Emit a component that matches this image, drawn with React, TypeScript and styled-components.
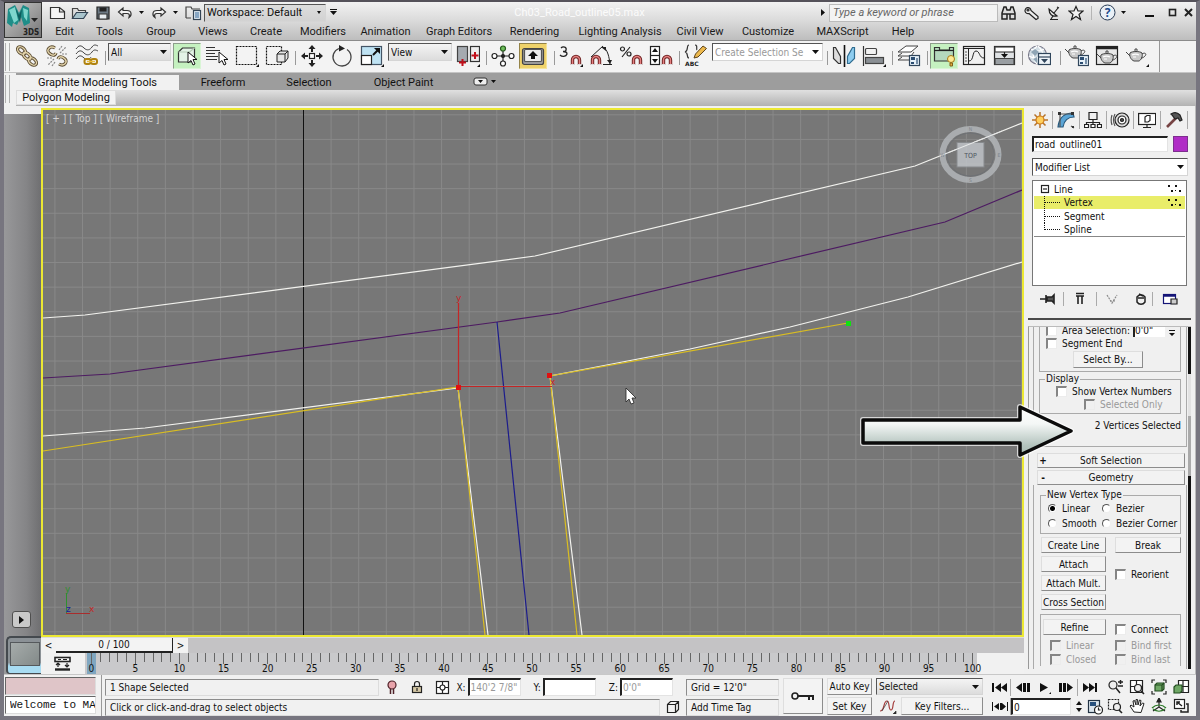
import React, { useState } from "react";
import styled, { createGlobalStyle, css } from "styled-components";

const uiFont = `Roboto, "Open Sans", sans-serif`;
const panelFont = `"DejaVu Sans Condensed", "DejaVu Sans", sans-serif`;

const GlobalStyle = createGlobalStyle`
  *, *::before, *::after { box-sizing: border-box; }
  body { margin: 0; font-family: ${panelFont}; font-size: 10px; line-height: 13px; color: #111; }
  button, input, select { font: inherit; color: inherit; margin: 0; padding: 0; border-radius: 0; }
  fieldset { margin: 0; min-width: 0; }
`;

/* ---------- frame ---------- */
const Window = styled.div`
  min-height: 100vh;
  display: flex;
  flex-direction: column;
  background: #f1f1f1;
  border: solid #77757f;
  border-width: 2px 4px 4px 4px;
  border-top-color: #55525a;
`;

const Header = styled.header`
  display: flex;
  height: 39px;
  background: linear-gradient(#f2f2f2, #dadada 50%, #bdbdbd);
  border-bottom: 1px solid #8b8b8b;
  font-family: ${uiFont};
  font-size: 11px;
`;

const AppButton = styled.button`
  width: 38px;
  height: 36px;
  border: 1px solid #333;
  background: linear-gradient(135deg, #c9c9c9, #777);
  display: block;
`;

const HeaderRows = styled.div`
  flex: 1;
  display: flex;
  flex-direction: column;
`;

const TitleRow = styled.div`
  display: flex;
  align-items: center;
  height: 22px;
  padding-left: 6px;
`;

const QuickButton = styled.button<{ $w?: number }>`
  width: ${(p) => p.$w ?? 24}px;
  height: 20px;
  border: 0;
  background: none;
  display: flex;
  align-items: center;
  justify-content: center;
`;

const FileTitle = styled.div`
  flex: 1;
  text-align: center;
  color: #fbfbfb;
`;

const SearchInput = styled.input`
  width: 169px;
  height: 18px;
  border: 1px solid #bbb;
  background: #f3f3f3;
  padding-left: 3px;
  font-style: italic;
  &::placeholder { color: #666; opacity: 1; }
`;

const TitleDivider = styled.span`
  width: 1px;
  height: 14px;
  background: #b5b5b5;
  margin: 0 4px;
`;

const MenuBar = styled.nav`
  display: flex;
  align-items: center;
  height: 17px;
  padding-left: 1px;
`;

const MenuLink = styled.a<{ $w: number }>`
  width: ${(p) => p.$w}px;
  text-align: center;
  color: #1a1a1a;
  text-decoration: none;
  white-space: nowrap;
`;

/* ---------- selects ---------- */
const SelectBox = styled.div<{ $w?: number; $h: number; $bg?: string; $color?: string }>`
  position: relative;
  width: ${(p) => (p.$w ? `${p.$w}px` : "100%")};
  height: ${(p) => p.$h}px;
  flex: none;
  border: 1px solid #d5d5d5;
  border-top-color: #555;
  border-left-color: #555;
  color: ${(p) => p.$color ?? "#111"};
  background: ${(p) => p.$bg ?? "linear-gradient(#f4f4f4, #dcdcdc)"};
  select {
    appearance: none;
    width: 100%;
    height: 100%;
    border: 0;
    background: none;
    padding: 0 14px 0 2px;
    display: block;
  }
  svg {
    position: absolute;
    right: 3px;
    top: 50%;
    margin-top: -2px;
    pointer-events: none;
  }
`;

type DropProps = { label: string; value: string; w?: number; h: number; bg?: string; color?: string; small?: boolean };
const Drop = ({ label, value, w, h, bg, color, small }: DropProps) => (
  <SelectBox $w={w} $h={h} $bg={bg} $color={color}>
    <select aria-label={label} defaultValue={value}>
      <option>{value}</option>
    </select>
    <svg width="7" height="4" viewBox="0 0 7 4">
      <path d={small ? "M2 0h4L4 3z" : "M0 0h7L3.5 4z"} fill="#111" />
    </svg>
  </SelectBox>
);

/* ---------- main toolbar ---------- */
const Toolbar = styled.div`
  display: flex;
  align-items: stretch;
  height: 32px;
  background: #f3f3f3;
  border-bottom: 1px solid #c4c4c4;
`;

const Grip = styled.span<{ $h: number }>`
  width: 5px;
  height: ${(p) => p.$h}px;
  margin: 2px 2px 0 1px;
  border: solid #b0b0b0;
  border-width: 0 1px;
`;

const ToolStrip = styled.div`
  flex: 1;
  display: flex;
  gap: 2px;
  padding: 2px 0 0 1px;
  border-right: 1px solid #999;
`;

const ToolEnd = styled.div`
  width: 36px;
`;

const ToolButton = styled.button<{ $tone?: "green" | "amber" }>`
  width: 28px;
  height: 26px;
  flex: none;
  border: 1px solid transparent;
  background: none;
  display: flex;
  align-items: center;
  justify-content: center;
  ${(p) => p.$tone === "green" && css`background: #c5f1c0; border-color: #8d9d8b #d9f5d5 #d9f5d5 #8d9d8b;`}
  ${(p) => p.$tone === "amber" && css`background: #efd26a; border-color: #948348 #f5e39b #f5e39b #948348;`}
`;

const ToolSep = styled.span<{ $wide?: boolean }>`
  width: ${(p) => (p.$wide ? 6 : 3)}px;
  height: 14px;
  margin-top: 8px;
  border-right: 1px solid #999;
  flex: none;
`;

/* ---------- ribbon ---------- */
const Ribbon = styled.div`
  display: flex;
  font-family: ${uiFont};
  font-size: 11px;
  background: #f1f1f1;
`;
const RibbonBody = styled.div`
  flex: 1;
  padding-left: 4px;
`;
const RibbonTabs = styled.div`
  display: flex;
  height: 17px;
  align-items: flex-end;
  background: #9d9d9d;
`;
const RibbonTab = styled.button<{ $w: number; $active?: boolean }>`
  width: ${(p) => p.$w}px;
  height: 15px;
  border: 0;
  white-space: nowrap;
  background: ${(p) => (p.$active ? "#f1f1f1" : "none")};
`;
const RibbonPanel = styled.div`
  height: 16px;
  background: linear-gradient(#e0e0e0, #b2b2b2);
`;
const PanelLabel = styled.button`
  width: 100px;
  height: 15px;
  border: 1px solid #ddd;
  background: #f3f3f3;
  white-space: nowrap;
`;

/* ---------- work area ---------- */
const Work = styled.main`
  position: relative;
  flex: 1;
  display: grid;
  grid-template-columns: 37px minmax(0, 1fr) 172px;
  border-bottom: 1px solid #c8c8c8;
`;

const LeftStrip = styled.div`
  display: flex;
  flex-direction: column;
  justify-content: flex-end;
  border-top: 8px solid #f0f0f0;
  background: linear-gradient(90deg, #98989a, #858587 60%, #6f6f71);
`;
const ExpandButton = styled.button`
  width: 19px;
  height: 17px;
  margin: 0 0 8px 8px;
  border: 1px solid #4f4f4f;
  border-radius: 3px;
  background: #c9c9c9;
  display: flex;
  align-items: center;
  justify-content: center;
`;
const LayoutTile = styled.button`
  height: 38px;
  margin-left: 2px;
  border: 2px solid #44494e;
  border-width: 2px 0 1px 2px;
  border-radius: 5px 0 0 4px;
  background: linear-gradient(#8b9196 70%, #a8dcf2 80%);
  padding: 4px 1px 7px 2px;
  span {
    display: block;
    height: 24px;
    border: 1px solid #55595c;
    background: linear-gradient(135deg, #a6acab, #838a89);
  }
`;

const Center = styled.div`
  display: flex;
  flex-direction: column;
  min-width: 0;
`;
const Viewport = styled.section`
  position: relative;
  flex: 1;
  min-height: 400px;
  margin-top: 2px;
  border: 2px solid #ece833;
  background: #777;
`;
const Scene = styled.svg`
  position: absolute;
  inset: 0;
  width: 100%;
  height: 100%;
  display: block;
`;
const ViewLabel = styled.div`
  position: absolute;
  left: 3px;
  top: 2px;
  color: #d4d4d4;
  white-space: pre;
`;

const TimeSlider = styled.div`
  display: flex;
  height: 16px;
  background: #c4c3c5;
  border-top: 1px solid #ddd;
`;
const TimeStep = styled.button`
  width: 15px;
  border: 0;
  background: #f2f2f2;
`;
const TimeHandle = styled.button`
  width: 117px;
  border: solid #222;
  border-width: 0 1px 2px 0;
  background: #f3f3f3;
`;

const TrackBar = styled.div`
  display: flex;
  height: 21px;
  background: #f1f1f1;
  padding-right: 47px;
`;
const TrackButton = styled.button`
  width: 44px;
  border: 0;
  background: none;
  display: flex;
  align-items: center;
  justify-content: center;
`;
const Ruler = styled.div`
  flex: 1;
  display: flex;
  padding-left: 2px;
  background: #c9c9cb;
`;
const Frame = styled.div<{ $current: boolean; $major: boolean }>`
  flex: 1 1 0;
  min-width: 0;
  display: flex;
  flex-direction: column;
  align-items: center;
  line-height: 10px;
  background: ${(p) => (p.$current ? "#7fa6c0" : "none")};
  &::before {
    content: "";
    flex: none;
    width: 1px;
    height: ${(p) => (p.$major ? 11 : 9)}px;
    background: #666;
  }
`;

/* ---------- command panel ---------- */
const Panel = styled.aside`
  display: flex;
  flex-direction: column;
  padding: 1px 4px 0 4px;
  background: #f0f0f0;
  border-right: 1px solid #bbb;
`;
const PanelTabs = styled.div`
  display: flex;
  height: 25px;
  align-items: center;
`;
const PanelTab = styled.button`
  width: 27px;
  height: 18px;
  border: 0;
  border-right: 1px solid #aaa;
  background: none;
  display: flex;
  align-items: center;
  justify-content: center;
  &:first-child { width: 25px; }
`;
const NameRow = styled.div`
  display: flex;
  align-items: center;
  gap: 5px;
  margin: 4px 3px 6px 4px;
`;
const sunken = css`
  border: solid #e3e3e3;
  border-width: 2px 1px 1px 2px;
  border-top-color: #222;
  border-left-color: #222;
`;
const TextField = styled.input<{ $w?: number; $h: number; $dim?: boolean }>`
  ${sunken}
  background: #fff;
  min-width: 0;
  height: ${(p) => p.$h}px;
  padding-left: 1px;
  color: ${(p) => (p.$dim ? "#999" : "#111")};
  ${(p) => (p.$w ? css`width: ${p.$w}px; flex: none;` : css`flex: 1;`)}
`;
const Swatch = styled.button`
  width: 15px;
  height: 16px;
  border: 1px solid #7d2f8e;
  background: #b02cc6;
`;
const Inset = styled.div`
  margin: 0 3px 0 4px;
`;
const Stack = styled.ul`
  list-style: none;
  margin: 4px 4px 0 4px;
  padding: 1px;
  height: 106px;
  border: 1px solid #777;
  background: #fff;
`;
const StackItem = styled.li<{ $active?: boolean; $last?: boolean }>`
  display: flex;
  align-items: center;
  height: 14px;
  gap: 4px;
  padding: 0 4px 0 6px;
  background: ${(p) => (p.$active ? "#e9ed69" : "none")};
  border-bottom: ${(p) => (p.$last ? "1px solid #888" : "0")};
  svg:last-child { margin-left: auto; }
  &:nth-child(2) { height: 13px; }
`;
const StackTools = styled.div`
  display: flex;
  align-items: center;
  height: 25px;
  padding-left: 5px;
  margin-bottom: 7px;
`;
const StackTool = styled.button<{ $w: number; $sep?: boolean }>`
  width: ${(p) => p.$w}px;
  height: 14px;
  border: 0;
  border-right: ${(p) => (p.$sep ? "1px solid #aaa" : "0")};
  background: none;
  display: flex;
  align-items: center;
  justify-content: center;
`;
const PanelRule = styled.hr`
  width: 100%;
  margin: 0 0 6px 0;
  border: 0;
  border-top: 2px solid #4a4a4a;
`;
const Rollouts = styled.div`
  flex: 1;
  display: flex;
  margin-bottom: 5px;
  border-left: 1px solid #999;
  border-top: 1px solid #bbb;
`;
const RolloutColumn = styled.div`
  flex: 1;
  display: flex;
  flex-direction: column;
  padding: 0 1px 0 4px;
`;
const ScrollTrack = styled.div`
  width: 3px;
  display: flex;
  flex-direction: column;
  background: #111;
`;
const ScrollThumb = styled.div`
  margin-top: 47px;
  height: 102px;
  background: #e2e2e2;
  border-bottom: 60px solid #aaa;
`;
const RolloutBody = styled.div`
  border: 1px solid #aaa;
  border-top: 0;
  padding: 0 5px;
`;
const Group = styled.fieldset<{ $open?: boolean; $pad?: number }>`
  border: 1px solid #aaa;
  padding: 0 0 ${(p) => p.$pad ?? 0}px 0;
  ${(p) => p.$open && css`border-bottom: 0;`}
  legend { margin-left: 5px; padding: 0 1px; height: 12px; line-height: 12px; }
`;
const AreaGroup = styled.div`
  border: 1px solid #aaa;
  border-top: 0;
  height: 45px;
`;
const Clipped = styled.div`
  display: flex;
  align-items: flex-end;
  height: 10px;
  overflow: hidden;
  white-space: nowrap;
`;
const Check = styled.label<{ $dim?: boolean; $indent?: number; $h?: number }>`
  display: flex;
  align-items: center;
  gap: 5px;
  height: ${(p) => p.$h ?? 14}px;
  padding-left: ${(p) => p.$indent ?? 0}px;
  white-space: nowrap;
  color: ${(p) => (p.$dim ? "#999" : "#111")};
  input {
    appearance: none;
    flex: none;
    width: 11px;
    height: 11px;
    background: ${(p) => (p.$dim ? "#f0f0f0" : "#fff")};
    border: solid #ececec;
    border-width: 2px 1px 1px 2px;
    border-top-color: #858585;
    border-left-color: #858585;
  }
`;
const Radio = styled.label`
  display: flex;
  align-items: center;
  gap: 5px;
  height: 15px;
  white-space: nowrap;
  input {
    appearance: none;
    width: 9px;
    height: 9px;
    flex: none;
    border-radius: 50%;
    border: 1px solid #eee;
    border-top-color: #555;
    border-left-color: #555;
    background: #fff;
  }
  input:checked { background: radial-gradient(#000 2px, #fff 3px); }
`;
const RadioGrid = styled.div`
  display: grid;
  grid-template-columns: 54px 1fr;
  padding: 0 0 2px 7px;
`;
const PushButton = styled.button<{ $w?: number; $h?: number }>`
  ${(p) => p.$w && css`width: ${p.$w}px;`}
  height: ${(p) => p.$h ?? 16}px;
  border: 1px solid #8c8c8c;
  border-top-color: #dedede;
  border-left-color: #dedede;
  background: #f3f3f3;
  white-space: nowrap;
  display: flex;
  align-items: center;
  justify-content: center;
`;
const SelectByRow = styled.div`
  display: flex;
  padding: 1px 0 0 33px;
`;
const RolloutHead = styled.button`
  display: grid;
  grid-template-columns: 10px 1fr 10px;
  height: 15px;
  margin: 0 2px 0 4px;
  border: 1px solid #8c8c8c;
  border-top-color: #ddd;
  border-left-color: #ddd;
  background: #f2f2f2;
  line-height: 13px;
  flex: none;
`;
const CountText = styled.div`
  height: 32px;
  padding-top: 5px;
  text-align: right;
`;
const GeoGrid = styled.div`
  display: grid;
  grid-template-columns: 65px 66px;
  column-gap: 9px;
  padding: 3px 0 4px 1px;
`;
const GeoCol = styled.div`
  display: flex;
  flex-direction: column;
  gap: 3px;
`;
const RefineGrid = styled.div`
  display: grid;
  grid-template-columns: 63px 1fr;
  column-gap: 9px;
  padding: 4px 0 0 2px;
`;

/* ---------- status area ---------- */
const Status = styled.footer`
  display: flex;
  height: 41px;
  background: #f1f1f1;
`;
const Listener = styled.div`
  width: 92px;
  display: flex;
  flex-direction: column;
  gap: 1px;
  padding: 2px 0 0 1px;
`;
const ListenerField = styled.input<{ $bg: string }>`
  width: 100%;
  height: 18px;
  background: ${(p) => p.$bg};
  border: 1px solid #ddd;
  border-top-color: #666;
  border-left-color: #666;
  padding-left: 4px;
  font-family: "Liberation Mono", monospace;
  font-size: 11px;
`;
const StatusColumn = styled.div`
  flex: 1;
  min-width: 0;
  margin-left: 5px;
  padding: 3px 0 0 3px;
  border-left: 1px solid #999;
`;
const StatusRow = styled.div`
  display: flex;
  align-items: center;
  height: 18px;
  margin-bottom: 2px;
`;
const Field = styled.div<{ $w?: number }>`
  ${(p) => (p.$w ? css`width: ${p.$w}px; flex: none;` : css`flex: 1; min-width: 0;`)}
  height: 17px;
  padding: 1px 0 0 4px;
  border: 1px solid #dcdcdc;
  border-top-color: #8c8c8c;
  border-left-color: #8c8c8c;
  white-space: nowrap;
`;
const Coord = styled.label`
  display: flex;
  align-items: center;
  gap: 2px;
  margin-right: 13px;
`;
const IconButton = styled.button<{ $w: number; $h?: number; $sep?: boolean }>`
  width: ${(p) => p.$w}px;
  height: ${(p) => p.$h ?? 17}px;
  flex: none;
  border: 0;
  border-right: ${(p) => (p.$sep ? "1px solid #aaa" : "0")};
  background: none;
  display: flex;
  align-items: center;
  justify-content: center;
`;
const KeyBlock = styled.div`
  display: grid;
  grid-template-columns: 40px 45px 107px;
  column-gap: 4px;
  padding: 3px 4px 0 4px;
`;
const KeyColumn = styled.div`
  display: flex;
  flex-direction: column;
  gap: 2px;
`;
const FilterRow = styled.div`
  display: flex;
  gap: 1px;
`;
const Transport = styled.div`
  display: flex;
  flex-direction: column;
  padding: 3px 0 0 2px;
  width: 117px;
`;
const TransportRow = styled.div`
  display: flex;
  align-items: center;
  height: 19px;
`;
const NavGrid = styled.div`
  display: grid;
  grid-template-columns: repeat(4, 22px);
  grid-auto-rows: 19px;
  padding: 3px 4px 0 0;
`;

const Callout = styled.svg`
  position: absolute;
  right: 119px;
  top: 295px;
  pointer-events: none;
`;

/* ---------- drawings ---------- */
const Art = ({ w = 24, h = 24, children }: { w?: number; h?: number; children: React.ReactNode }) => (
  <svg width={w} height={h} viewBox={`0 0 ${w} ${h}`} fill="none" stroke="#222" strokeWidth="1.2" aria-hidden="true">
    {children}
  </svg>
);
const Flyout = () => <path d="M24 20v3h-3z" fill="#111" stroke="none" />;
const Magnet = ({ x, y }: { x: number; y: number }) => (
  <g transform={`translate(${x} ${y})`}>
    <path d="M1.500 10V5a3.500 3.500 0 0 1 7 0v5" stroke="#702424" strokeWidth="3.400" />
    <path d="M1.500 9V5a3.500 3.500 0 0 1 7 0v4" stroke="#e58080" strokeWidth="1.400" />
    <path d="M0 9.500h3M7 9.500h3" stroke="#ddd" strokeWidth="1" />
  </g>
);
const Teapot = ({ x, y }: { x: number; y: number }) => (
  <g transform={`translate(${x} ${y})`}>
    <path d="M4 5C6 3 14 3 16 5c1 4-1 7-3 8H8C5 12 3 8 4 5z" fill="#c9c9c9" stroke="#444" strokeWidth="1" />
    <path d="M4 8L0 4M16 6c3-2 5 0 3 2-1 1-2 2-4 2M9 3V1h2v2" stroke="#444" strokeWidth="1" />
    <path d="M6 7c2-1 5-1 7 0M7 9h3" stroke="#fff" />
  </g>
);
const Chip = ({ x, y }: { x: number; y: number }) => (
  <g transform={`translate(${x} ${y})`}>
    <rect x=".5" y=".5" width="10" height="10" fill="#e8f2fa" stroke="#31465c" />
    <path d="M2 2h4v3H2zM2 7h3v2H2z" fill="#2b4d72" stroke="none" />
    <path d="M8 3v6" stroke="#2b4d72" />
  </g>
);
const Pointer = ({ x, y }: { x: number; y: number }) => (
  <path transform={`translate(${x} ${y})`} d="M0 0v11l3-2.500 2 4.500 2-1-2-4.500h4z" fill="#fff" stroke="#111" strokeWidth="1" />
);

const tools: Record<string, React.ReactNode> = {
  link: (
    <>
      <g stroke="#5c4d33" strokeWidth="3.200"><ellipse cx="6.500" cy="6.500" rx="4.500" ry="3" transform="rotate(40 6.500 6.500)" /><ellipse cx="17.500" cy="17.500" rx="4.500" ry="3" transform="rotate(40 17.500 17.500)" /><ellipse cx="12" cy="12" rx="4.500" ry="2.500" transform="rotate(42 12 12)" /></g>
      <g stroke="#e2d3aa" strokeWidth="1.400"><ellipse cx="6.500" cy="6.500" rx="4.500" ry="3" transform="rotate(40 6.500 6.500)" /><ellipse cx="17.500" cy="17.500" rx="4.500" ry="3" transform="rotate(40 17.500 17.500)" /><ellipse cx="12" cy="12" rx="4.500" ry="2.500" transform="rotate(42 12 12)" /></g>
    </>
  ),
  unlink: (
    <>
      <g stroke="#5c4d33" strokeWidth="3.200"><path d="M10 4C5 1 1 6 4 9s6 3 7 0M14 20c5 3 9-2 6-5s-6-3-7 0" /></g>
      <g stroke="#e2d3aa" strokeWidth="1.400"><path d="M10 4C5 1 1 6 4 9s6 3 7 0M14 20c5 3 9-2 6-5s-6-3-7 0" /></g>
      <path d="M15 9l6-6M14 6l3-4M17 10h5M9 15l-6 6M10 18l-3 4M7 14H2" stroke="#888" strokeDasharray="2 1" />
    </>
  ),
  bind: (
    <>
      <path d="M1 5c3-4 5-4 8-1s6 2 8-1 4-2 6-1M1 10c3-4 5-4 8-1s6 2 8-1 4-2 6-1M1 15c3-4 5-4 8-1s6 1 7-1" stroke="#444" strokeWidth="1" />
      <rect x="9.500" y="15" width="6" height="5" rx="2" stroke="#b08310" strokeWidth="2" /><rect x="16" y="15" width="6" height="5" rx="2" stroke="#b08310" strokeWidth="2" /><path d="M12 17.500h8" stroke="#e8bd3d" strokeWidth="1.500" />
    </>
  ),
  select: (
    <>
      <path d="M3.500 18V8l4-4h12v9l-4 5z" fill="#e3f3e6" stroke="#333" /><path d="M3.500 8h11l5-4M14.500 8v9" stroke="#b5ccb5" /><Pointer x={13} y={8} />
    </>
  ),
  byName: (
    <>
      <path d="M1 3.500h9M1 6.500h14M1 9.500h9M1 12.500h12M1 15.500h11" stroke="#333" strokeWidth="1" /><Pointer x={14} y={8} />
    </>
  ),
  rect: (
    <><rect x="1.500" y="2.500" width="20" height="18" stroke="#111" strokeDasharray="2 1" /><Flyout /></>
  ),
  crossing: (
    <><rect x="1.500" y="2.500" width="15" height="18" stroke="#111" strokeDasharray="2 1" /><path d="M12 10l3-3h8v7l-3 4h-8z" fill="#e6e6e6" strokeWidth="1" /><path d="M12 10h8v8M20 10l3-3" strokeWidth="1" /></>
  ),
  move: (
    <>
      <path d="M12 3v5M12 16v5M3 12h5M16 12h5" strokeWidth="2" /><path d="M12 1l3.500 4h-7zM12 23l3.500-4h-7zM1 12l4-3.500v7zM23 12l-4-3.500v7z" fill="#222" stroke="none" /><rect x="9.500" y="9.500" width="5" height="5" fill="#fff" />
    </>
  ),
  rotate: (
    <><path d="M9 4.500a9 9 0 1 0 8 1" stroke="#444" strokeWidth="1.300" /><path d="M9 1l6 3.500-6 3z" fill="#222" stroke="none" /></>
  ),
  scale: (
    <>
      <rect x="1.500" y="2.500" width="20" height="18" fill="#bfe3f3" stroke="#456" /><rect x="1.500" y="11.500" width="10" height="9" fill="#fff" stroke="#222" /><path d="M13 11l5-5" stroke="#111" strokeWidth="2" /><path d="M20 4v6l-6-6z" fill="#111" stroke="none" /><Flyout />
    </>
  ),
  pivot: (
    <>
      <rect x="1.500" y="2.500" width="10" height="15" fill="#a5aab0" stroke="#444" /><rect x="14.500" y="2.500" width="9" height="15" fill="#eee" stroke="#333" /><path d="M6.500 15v7M3 18.500h7M19 8v7M15.500 11.500h7" stroke="#c00f1a" strokeWidth="2" /><Flyout />
    </>
  ),
  manipulate: (
    <>
      <path d="M12 7v10M5 12h14" /><circle cx="12" cy="4.500" r="2.500" fill="#6fbe5d" stroke="#275c1d" /><circle cx="3.500" cy="12" r="2.500" fill="#fff" /><circle cx="20.500" cy="12" r="2.500" fill="#fff" /><circle cx="12" cy="19.500" r="2.500" fill="#fff" /><circle cx="12" cy="12" r="1.500" fill="#222" />
    </>
  ),
  keyboard: (
    <>
      <rect x="1.500" y="4.500" width="21" height="16" rx="2" fill="#9a9a9a" stroke="#444" /><rect x="3.500" y="5.500" width="17" height="12" rx="1" fill="#ededed" stroke="#555" /><path d="M12 7l5 5h-3v3h-4v-3H7z" fill="#111" stroke="none" />
    </>
  ),
  snap: (
    <><path d="M2 4c2-2 6-1 5 2 0 1-1 1.500-3 1.500 3 0 4 1 4 2.500-1 3-5 3-7 1" stroke="#222" strokeWidth="1.300" /><Magnet x={12} y={11} /><Flyout /></>
  ),
  angle: (
    <><path d="M2 13L14 2M14 20.500h9M14 3c5 3 6 10 7 17" stroke="#222" strokeWidth="1" /><path d="M17 7l-5-4 5 0zM18 16l3 4 2-4z" fill="#222" stroke="none" /><Magnet x={2} y={11} /></>
  ),
  percent: (
    <><circle cx="3.500" cy="5" r="2" /><circle cx="10" cy="10" r="2" /><path d="M11 3L3 13" /><Magnet x={13} y={11} /></>
  ),
  spinner: (
    <><rect x="1.500" y="2.500" width="9" height="18" fill="#fff" /><path d="M1 11.500h10" /><path d="M6 4l3 4H3zM6 19l3-4H3z" fill="#111" stroke="none" /><Magnet x={13} y={11} /></>
  ),
  named: (
    <>
      <path d="M5 1C2 1 5 7 1 8c4 1 1 6 4 6M11 1c3 0 1 4 2 5" stroke="#333" strokeWidth="1.200" /><path d="M10 14l1.500-4L19 2l3.500 2.500L14 13z" fill="#edb94d" stroke="#5c431b" strokeWidth="1" />
      <text x="1" y="22" fontSize="6" fontFamily="DejaVu Sans" fontWeight="bold" fill="#222" stroke="none">ABC</text>
    </>
  ),
  mirror: (
    <><path d="M1.500 3.500h2l5 9v7h-2l-5-5z" fill="#ddd" stroke="#333" /><path d="M12.500 1v22" stroke="#111" strokeWidth="1.600" /><path d="M22.500 3.500h-2l-5 9v7h2l5-5z" fill="#8ecdf0" stroke="#2f6c90" /></>
  ),
  align: (
    <><path d="M1.500 2v20" stroke="#333" /><rect x="3.500" y="4.500" width="11" height="6" rx="1" fill="#f2f2f2" stroke="#444" /><rect x="3.500" y="13.500" width="18" height="6" fill="#8a8f94" stroke="#444" /><Flyout /></>
  ),
  layers: (
    <><path d="M1 8l8-6h12l-7 6zM1 12l4-3M1 12h13l3-4M1 16l4-3M1 16h11" fill="#fff" stroke="#444" strokeWidth="1" /><Chip x={12} y={11} /></>
  ),
  ribbon: (
    <><path d="M2.500 6V3.500h5V6h10V3.500h4v13.500h-19z" fill="#b4d8bd" stroke="#333" /><path d="M2 6.500h20" /><circle cx="19" cy="15" r="3.500" fill="#ffe892" stroke="#a67a16" strokeWidth="1" /><path d="M18 19h2.500v3H18z" fill="#e6b23e" stroke="#80601c" strokeWidth="1" /></>
  ),
  curve: (
    <><rect x="1.500" y="2.500" width="21" height="18" fill="#f0f0f0" stroke="#222" /><path d="M1 4.500h22M6.500 5v15" strokeWidth="1" /><path d="M7 17c5 0 3-10 7-10s3 7 8 7" stroke="#222" strokeWidth="1" /><path d="M3 8h2M3 11h2M3 14h2M3 17h2" stroke="#555" strokeWidth="1" /></>
  ),
  schematic: (
    <><rect x="2.500" y="2.500" width="20" height="18" fill="#dfe2e4" stroke="#222" /><rect x="3" y="3" width="19" height="5" fill="#fff" stroke="#444" /><path d="M3 14.500h19v6H3z" fill="#999ea2" stroke="#444" /><path d="M12.500 8v4" /><path d="M9 10h7l-3.500 4z" fill="#111" stroke="none" /></>
  ),
  material: (
    <><circle cx="10.500" cy="11" r="9" fill="#d3dee5" stroke="#778" /><path d="M4 5c5 3 9 3 13 0M2 12c5 3 9 3 13 0M10 2c-5 5-5 12 0 18M11 2c4 4 5 6 5 9" stroke="#fff" /><path d="M4 8l4-3 4 3-4 4zM6 15l4-2v6z" fill="#8fa5b5" stroke="none" /><rect x="11.500" y="9.500" width="12" height="11" fill="#edf3f8" stroke="#2f455b" /><path d="M12 13h11" stroke="#2f455b" /><path d="M14 15h7l-3.500 4z" fill="#2f455b" stroke="none" /></>
  ),
  renderSetup: (<><Teapot x={0} y={1} /><Chip x={13} y={11} /></>),
  renderFrame: (<><rect x="1.500" y="2.500" width="21" height="18" fill="#e7e7e7" stroke="#222" /><path d="M1 4h22" strokeWidth="2.500" /><Teapot x={2} y={6} /></>),
  render: (<><Teapot x={1} y={4} /><Flyout /></>),
};

const Tool = ({ id, label, tone }: { id: string; label: string; tone?: "green" | "amber" }) => (
  <ToolButton $tone={tone} aria-label={label} title={label}>
    <Art>{tools[id]}</Art>
  </ToolButton>
);

const Tiny = ({ d, w = 16, h = 14, fill = "#111" }: { d: string; w?: number; h?: number; fill?: string }) => (
  <svg width={w} height={h} viewBox={`0 0 ${w} ${h}`} fill={fill} aria-hidden="true"><path d={d} /></svg>
);

const VertexDots = () => <Tiny w={14} h={10} d="M1 1h2v2H1zM8 1h2v2H8zM4 6h2v2H4zM8 6h1v1H8zM12 6h2v2h-2z" />;
const Branch = ({ last }: { last?: boolean }) => (
  <svg width="16" height="13" viewBox="0 0 16 13" stroke="#111" strokeDasharray="1 1" aria-hidden="true">
    <path d={last ? "M.5 0v7M1 6.500h15" : "M.5 0v13M1 6.500h15"} fill="none" />
  </svg>
);

const gridX = Array.from({ length: 36 }, (_, i) => 54.9 + i * 27.62);
const gridY = Array.from({ length: 22 }, (_, i) => 114.8 + i * 24.62);

const menus: [string, number][] = [
  ["Edit", 43], ["Tools", 47], ["Group", 56], ["Views", 48], ["Create", 58], ["Modifiers", 56], ["Animation", 69],
  ["Graph Editors", 78], ["Rendering", 73], ["Lighting Analysis", 98], ["Civil View", 62], ["Customize", 74],
  ["MAXScript", 75], ["Help", 46],
];

const SceneView = () => (
  <Scene viewBox="43 110 979 525" preserveAspectRatio="xMinYMin slice" fill="none">
    <g stroke="#898989">
      {gridX.map((x) => <path key={x} d={`M${x} 100V700`} />)}
      {gridY.map((y) => <path key={y} d={`M0 ${y}H1100`} />)}
    </g>
    <path d="M303.500 100V640" stroke="#111" />
    <path d="M43 378L110 374 497 322 560 313 945 222 1022 190" stroke="#4d1b62" strokeWidth="1.200" />
    <path d="M497 322L529 635" stroke="#1c1c8c" strokeWidth="1.200" />
    <g stroke="#f2f2ee" strokeWidth="1.200">
      <path d="M43 318L85 315 535 256 915 166 1022 123" />
      <path d="M43 436L145 428 458 388 488 635" />
      <path d="M582 635L550 376 690 349 790 327 908 297 1022 262" />
    </g>
    <g stroke="#d9bd22" strokeWidth="1.200">
      <path d="M43 451L458 387 485 635" />
      <path d="M848 323L550 376 577 635" />
    </g>
    <path d="M458.500 387V303M458 386.500H552" stroke="#c32626" strokeWidth="1.200" />
    <g fontFamily="DejaVu Sans" fontSize="9" fill="#c32626">
      <text x="456" y="301">y</text>
      <text x="550" y="385">x</text>
    </g>
    <path d="M456 385h5v5h-5zM547 373h5v5h-5z" fill="#e01010" />
    <path d="M846 321h5v5h-5z" fill="#12e012" />
    <path d="M626 388v14l3-3 2 5 3-1-2-5h4z" fill="#fff" stroke="#222" strokeWidth=".8" />
    <g opacity=".8">
      <ellipse cx="970.500" cy="154.500" rx="28" ry="25.500" stroke="#b6babd" strokeWidth="6" />
      <ellipse cx="970.500" cy="154.500" rx="23.500" ry="21.500" stroke="#6c7075" />
      <rect x="957" y="142.500" width="27" height="24.500" fill="#c4c8cc" stroke="#8b8f93" />
      <path d="M940 156L1002 131" stroke="#e6e8e9" />
    </g>
    <g fontFamily="DejaVu Sans Condensed" fontSize="7" fill="#4d545b">
      <text x="970.500" y="158" textAnchor="middle">TOP</text>
      <g fontSize="5" fill="#7d858c" textAnchor="middle">
        <text x="970.500" y="131">N</text><text x="970.500" y="182">S</text>
        <text x="942.500" y="157">W</text><text x="999" y="157">E</text>
      </g>
    </g>
    <path d="M66.500 613V593" stroke="#2f8f2f" />
    <path d="M66 613.500H90" stroke="#a92c2c" />
    <g fontFamily="DejaVu Sans" fontSize="9">
      <text x="65" y="592" fill="#2f8f2f">y</text>
      <text x="89" y="612" fill="#c32626">x</text>
      <text x="66" y="612" fill="#1b1b99">z</text>
    </g>
  </Scene>
);

const CommandPanel = () => {
  const [name, setName] = useState("road_outline01");
  return (
    <Panel>
      <PanelTabs>
        <PanelTab aria-label="Create"><Art w={18} h={18}><path d="M9 1v16M1 9h16M3.500 3.500l11 11M14.500 3.500l-11 11" stroke="#b5732b" strokeWidth="1.500" /><circle cx="9" cy="9" r="4" fill="#ffcf5c" stroke="#cc7a1c" /></Art></PanelTab>
        <PanelTab aria-label="Modify"><Art w={18} h={18}><path d="M1 16C2 7 7 2 16 2l1 4c-6 0-10 4-11 10z" fill="#5ba5d6" stroke="#27597d" /><path d="M1 3h15M3 1v15M14 15l3 2" stroke="#555" /><path d="M1 1h3v3H1zM14 1h3v3h-3zM15 15h2v2h-2z" fill="#333" stroke="none" /></Art></PanelTab>
        <PanelTab aria-label="Hierarchy"><Art w={18} h={18}><path d="M5 1.500h8v7H5zM9 9v3M2.500 14v-2.500h13V14M9 11v3" /><path d="M.500 13.500h4v3h-4zM7 13.500h4v3H7zM13.500 13.500h4v3h-4z" fill="#fff" /></Art></PanelTab>
        <PanelTab aria-label="Motion"><Art w={20} h={18}><circle cx="12" cy="9" r="7" fill="#ddd" /><circle cx="12" cy="9" r="4" fill="#fff" /><circle cx="12" cy="9" r="1.500" fill="#555" /><path d="M5 3c-2 4-2 8 0 12M2 4c-1 3-1 7 0 10" stroke="#555" /></Art></PanelTab>
        <PanelTab aria-label="Display"><Art w={18} h={18}><rect x=".6" y="2.500" width="17" height="11" fill="#fff" /><path d="M7 6l2-1.500h3v5L10 11H7zM5 16.500h8M9 14v2" /></Art></PanelTab>
        <PanelTab aria-label="Utilities"><Art w={18} h={18}><path d="M2 16L11 7" stroke="#744" strokeWidth="2.600" /><path d="M6 3c3-2 6-2 9 1l2 5-2 1-2-3-3 1-3-4z" fill="#555" /></Art></PanelTab>
      </PanelTabs>
      <NameRow>
        <TextField aria-label="Object name" $h={16} value={name} onChange={(e) => setName(e.target.value)} />
        <Swatch aria-label="Object colour" />
      </NameRow>
      <Inset><Drop label="Modifier List" value="Modifier List" h={18} bg="#fff" /></Inset>
      <Stack>
        <StackItem><Art w={10} h={10}><rect x="1.500" y="1.500" width="7" height="7" /><path d="M3 5h4" /></Art>Line<VertexDots /></StackItem>
        <StackItem $active><Spacer /><Branch />Vertex<VertexDots /></StackItem>
        <StackItem><Spacer /><Branch /><span>Segment</span></StackItem>
        <StackItem $last><Spacer /><Branch last /><span>Spline</span></StackItem>
      </Stack>
      <StackTools>
        <StackTool $w={31} $sep aria-label="Pin stack"><Art w={16} h={12}><path d="M0 6h6M6 2v8M7 4h5l2-2v8l-2-2H7z" fill="#555" strokeWidth="1.600" /></Art></StackTool>
        <StackTool $w={33} $sep aria-label="Show end result"><Art w={12} h={14}><path d="M2 1.500h8M2 4h8M4 4v8M8 4v8" strokeWidth="1.600" /></Art></StackTool>
        <StackTool $w={32} aria-label="Make unique"><Art w={14} h={12}><path d="M1 2l5 8 5-8M4 8h6" stroke="#888" strokeDasharray="2 1" /></Art></StackTool>
        <StackTool $w={24} $sep aria-label="Remove modifier"><Art w={12} h={14}><path d="M2 5c2-3 6-3 8 0v5c-2 3-6 3-8 0zM3 6h6M4 2l4 2" strokeWidth="1.500" /></Art></StackTool>
        <StackTool $w={34} aria-label="Configure sets"><Art w={16} h={14}><rect x="1.500" y="2.500" width="12" height="9" stroke="#151577" fill="#fff" /><path d="M1 3.500h13" stroke="#151577" strokeWidth="2.500" /><path d="M9 7h6v5H9z" fill="#ccc" /></Art></StackTool>
      </StackTools>
      <PanelRule />
      <Rollouts>
        <RolloutColumn>
          <RolloutBody>
            <AreaGroup>
              <Clipped><Check $indent={6} $h={13}><input type="checkbox" />Area Selection:</Check><ClippedField aria-label="Area" defaultValue={`0'0"`} /><Tiny w={14} h={8} d="M4 1h6v1H4zM4 4h6L7 7z" /></Clipped>
              <Check $indent={6} $h={13}><input type="checkbox" />Segment End</Check>
              <SelectByRow><PushButton $w={70} $h={17}>Select By...</PushButton></SelectByRow>
            </AreaGroup>
            <Gap $h={1} />
            <Group $pad={2}>
              <legend>Display</legend>
              <Check $indent={16} $h={13}><input type="checkbox" />Show Vertex Numbers</Check>
              <Check $indent={44} $h={13} $dim><input type="checkbox" disabled />Selected Only</Check>
            </Group>
            <CountText>2 Vertices Selected</CountText>
          </RolloutBody>
          <Gap $h={6} />
          <RolloutHead><b>+</b><span>Soft Selection</span></RolloutHead>
          <Gap $h={2} />
          <RolloutHead><b>-</b><span>Geometry</span></RolloutHead>
          <GeoBody>
            <Group>
              <legend>New Vertex Type</legend>
              <RadioGrid>
                <Radio><input type="radio" name="vt" defaultChecked />Linear</Radio>
                <Radio><input type="radio" name="vt" />Bezier</Radio>
                <Radio><input type="radio" name="vt" />Smooth</Radio>
                <Radio><input type="radio" name="vt" />Bezier Corner</Radio>
              </RadioGrid>
            </Group>
            <GeoGrid>
              <GeoCol>
                <PushButton>Create Line</PushButton>
                <PushButton>Attach</PushButton>
                <PushButton>Attach Mult.</PushButton>
                <PushButton>Cross Section</PushButton>
              </GeoCol>
              <div>
                <PushButton $w={66}>Break</PushButton>
                <Gap $h={14} />
                <Check><input type="checkbox" />Reorient</Check>
              </div>
            </GeoGrid>
            <Group $open>
              <RefineGrid>
                <div>
                  <PushButton $w={63}>Refine</PushButton>
                  <Gap $h={3} />
                  <Check $indent={7} $dim><input type="checkbox" disabled />Linear</Check>
                  <Check $indent={7} $dim><input type="checkbox" disabled />Closed</Check>
                </div>
                <div>
                  <Gap $h={3} />
                  <Check><input type="checkbox" />Connect</Check>
                  <Gap $h={2} />
                  <Check $dim><input type="checkbox" disabled />Bind first</Check>
                  <Check $dim><input type="checkbox" disabled />Bind last</Check>
                </div>
              </RefineGrid>
            </Group>
          </GeoBody>
        </RolloutColumn>
        <ScrollTrack><ScrollThumb /></ScrollTrack>
      </Rollouts>
    </Panel>
  );
};

const Spacer = styled.span`
  width: 0;
`;
const Gap = styled.div<{ $h: number }>`
  height: ${(p) => p.$h}px;
  flex: none;
`;
const ClippedField = styled.input`
  width: 32px;
  height: 13px;
  margin-left: 3px;
  border: 0;
  border-left: 2px solid #222;
  background: #fff;
`;
const GeoBody = styled.div`
  flex: 1;
  padding: 4px 5px 0 6px;
  border: solid #aaa;
  border-width: 0 1px;
`;

export default function App() {
  return (
    <>
      <GlobalStyle />
      <Window>
        <Header>
          <AppButton aria-label="Application menu">
            <svg width="36" height="34" viewBox="0 0 36 34">
              <path d="M3 6l7-4 4 8 4-8 6 3 1 15-6 3-3-9-4 8-4-2-1 4-5-4z" fill="#1f8d88" />
              <path d="M4 7l6-3 3 13-4 3zM18 5l5 2-1 11-3-4z" fill="#7ed6cd" />
              <path d="M10 4l4 8 3-6-2 14z" fill="#0e5d5d" />
              <path d="M26 15h7l-3.500 4z" fill="#222" />
              <text x="18" y="32" fontSize="8" fontFamily="DejaVu Sans Condensed" fontWeight="bold" fill="#222">3DS</text>
            </svg>
          </AppButton>
          <HeaderRows>
            <TitleRow>
              <QuickButton $w={20} aria-label="New"><Art w={18} h={16}><path d="M1.500 13.500v-11h9l5 4v7zM10.500 3v4h5" fill="#f5f5f5" stroke="#333" /></Art></QuickButton>
              <QuickButton $w={24} aria-label="Open"><Art w={18} h={16}><path d="M1.500 13.500v-10h5l1 2h7v3" fill="#ddd" stroke="#444" /><path d="M1.500 13.500l4-6h11l-4 6z" fill="#a9c4cc" stroke="#345" /></Art></QuickButton>
              <QuickButton $w={22} aria-label="Save"><Art w={16} h={16}><path d="M2 2h12v12H2z" fill="#6d7a85" stroke="#222" /><path d="M4.500 2.500h7v4h-7z" fill="#222" stroke="none" /><path d="M4 9h8v5H4z" fill="#e6ecf0" stroke="#333" /></Art></QuickButton>
              <QuickButton $w={22} aria-label="Undo"><Art w={16} h={16}><path d="M1.500 7L6 3v2.500h4c5 0 5 5 2 7 1-3 0-4-2-4H6V11z" fill="#f3f3f3" stroke="#333" /></Art></QuickButton>
              <QuickButton $w={12} aria-label="Undo list"><Tiny w={6} h={4} d="M0 0h5L2.500 3z" /></QuickButton>
              <QuickButton $w={22} aria-label="Redo"><Art w={16} h={16}><path d="M14.500 7L10 3v2.500H6c-5 0-5 5-2 7-1-3 0-4 2-4h4V11z" fill="#f3f3f3" stroke="#333" /></Art></QuickButton>
              <QuickButton $w={12} aria-label="Redo list"><Tiny w={6} h={4} d="M0 0h5L2.500 3z" /></QuickButton>
              <QuickButton $w={22} aria-label="Project folder"><Art w={18} h={16}><path d="M2 13V2h5l1 2h8M2 13h5" stroke="#444" /><rect x="9.500" y="5.500" width="7" height="9" fill="#e2eef7" stroke="#345" /><path d="M11 8h4M11 10h4M11 12h4" stroke="#2d6094" /></Art></QuickButton>
              <Drop label="Workspace" value="Workspace: Default" w={122} h={18} bg="linear-gradient(#ddd, #d2d2d2)" small />
              <QuickButton $w={16} aria-label="Customize quick access"><Tiny w={8} h={7} d="M0 0h7v1H0zM0 2h7L3.500 6z" /></QuickButton>
              <FileTitle>Ch03_Road_outline05.max</FileTitle>
              <QuickButton $w={12} aria-label="Expand search"><Tiny w={5} h={8} d="M0 0v7l4-3.500z" /></QuickButton>
              <SearchInput aria-label="Search" placeholder="Type a keyword or phrase" />
              <QuickButton $w={22} aria-label="Find"><Art w={18} h={16}><path d="M2 8l2-6h2l1 3h3l1-3h2l2 6v6h-5V9H7v5H2zM2 9h5M10 9h5" fill="#ddd" strokeWidth="1.500" /></Art></QuickButton>
              <QuickButton $w={23} aria-label="Subscription"><Art w={16} h={16}><path d="M7 5.500a3 3 0 1 0-2 3l7 6 2-1v-2z" fill="#eee" /><circle cx="4" cy="5" r="1" /></Art></QuickButton>
              <QuickButton $w={22} aria-label="Communication"><Art w={16} h={16}><path d="M3 4c0 5 3 8 8 7zM8 8l4-5M4 14.500h8M7 11l-2 3M11 2l2 1" fill="#eee" /></Art></QuickButton>
              <QuickButton $w={22} aria-label="Favorites"><Art w={16} h={16}><path d="M8 1.500l2 4.500h5l-4 3.500 1.500 5L8 11.500l-4.500 3 1.500-5L1 6h5z" fill="#f1f1f1" /></Art></QuickButton>
              <TitleDivider />
              <QuickButton $w={22} aria-label="Help">
                <svg width="17" height="17" viewBox="0 0 17 17"><circle cx="8.500" cy="8.500" r="7.500" fill="#e9f0f7" stroke="#2a3c55" /><text x="8.500" y="13" textAnchor="middle" fontSize="12" fontWeight="bold" fontFamily="Open Sans" fill="#1d4a8c">?</text></svg>
              </QuickButton>
              <QuickButton $w={12} aria-label="Help list"><Tiny w={6} h={4} d="M0 0h5L2.500 3z" /></QuickButton>
              <QuickButton $w={36} aria-label="Minimize"><Tiny w={12} h={10} d="M3 7h9v2H3z" /></QuickButton>
              <QuickButton $w={14} aria-label="Restore"><Art w={10} h={9}><rect x="1.500" y="1.500" width="6" height="6" strokeWidth="1.600" /></Art></QuickButton>
              <QuickButton $w={16} aria-label="Close"><Art w={9} h={9}><path d="M1 1l7 7M8 1L1 8" strokeWidth="2" /></Art></QuickButton>
            </TitleRow>
            <MenuBar>
              {menus.map(([m, w]) => <MenuLink key={m} $w={w} href="#">{m}</MenuLink>)}
            </MenuBar>
          </HeaderRows>
        </Header>

        <Toolbar>
          <Grip $h={28} />
          <ToolStrip>
            <Tool id="link" label="Link" />
            <Tool id="unlink" label="Unlink" />
            <Tool id="bind" label="Bind to space warp" />
            <ToolSep />
            <Drop label="Selection filter" value="All" w={63} h={18} />
            <Tool id="select" label="Select object" tone="green" />
            <Tool id="byName" label="Select by name" />
            <Tool id="rect" label="Rectangular region" />
            <Tool id="crossing" label="Window crossing" />
            <ToolSep />
            <Tool id="move" label="Move" />
            <Tool id="rotate" label="Rotate" />
            <Tool id="scale" label="Scale" />
            <Drop label="Reference coordinates" value="View" w={64} h={18} />
            <Tool id="pivot" label="Pivot centre" />
            <ToolSep />
            <Tool id="manipulate" label="Manipulate" />
            <Tool id="keyboard" label="Keyboard override" tone="amber" />
            <ToolSep $wide />
            <Tool id="snap" label="Snap" />
            <Tool id="angle" label="Angle snap" />
            <Tool id="percent" label="Percent snap" />
            <Tool id="spinner" label="Spinner snap" />
            <ToolSep />
            <Tool id="named" label="Edit selection sets" />
            <Drop label="Selection sets" value="Create Selection Se" w={111} h={18} bg="#fff" color="#999" />
            <ToolSep />
            <Tool id="mirror" label="Mirror" />
            <Tool id="align" label="Align" />
            <ToolSep />
            <Tool id="layers" label="Layers" />
            <ToolSep />
            <Tool id="ribbon" label="Ribbon" tone="green" />
            <Tool id="curve" label="Curve editor" />
            <Tool id="schematic" label="Schematic view" />
            <ToolSep />
            <Tool id="material" label="Material editor" />
            <ToolSep $wide />
            <Tool id="renderSetup" label="Render setup" />
            <Tool id="renderFrame" label="Rendered frame" />
            <Tool id="render" label="Render" />
          </ToolStrip>
          <ToolEnd />
        </Toolbar>

        <Ribbon>
          <Grip $h={28} />
          <RibbonBody>
            <RibbonTabs>
              <RibbonTab $w={163} $active>Graphite Modeling Tools</RibbonTab>
              <RibbonTab $w={88}>Freeform</RibbonTab>
              <RibbonTab $w={84}>Selection</RibbonTab>
              <RibbonTab $w={105}>Object Paint</RibbonTab>
              <RibbonTab $w={58} aria-label="Ribbon display">
                <svg width="24" height="9" viewBox="0 0 24 9"><rect x="1" y="1" width="13" height="7" rx="2" fill="#eee" stroke="#333" /><path d="M5 3h5L7.500 6zM18 3h5l-2.500 3z" fill="#111" /></svg>
              </RibbonTab>
            </RibbonTabs>
            <RibbonPanel><PanelLabel>Polygon Modeling</PanelLabel></RibbonPanel>
          </RibbonBody>
        </Ribbon>

        <Work>
          <LeftStrip>
            <ExpandButton aria-label="Expand"><Tiny w={6} h={8} d="M0 0v8l5-4z" /></ExpandButton>
            <LayoutTile aria-label="Viewport layout"><span /></LayoutTile>
          </LeftStrip>
          <Center>
            <Viewport>
              <SceneView />
              <ViewLabel>[ + ] [ Top ] [ Wireframe ]</ViewLabel>
            </Viewport>
            <TimeSlider>
              <TimeStep>&lt;</TimeStep>
              <TimeHandle>0 / 100</TimeHandle>
              <TimeStep>&gt;</TimeStep>
            </TimeSlider>
            <TrackBar>
              <TrackButton aria-label="Mini curve editor"><Art w={18} h={16}><rect x="1" y="1.500" width="15" height="4" strokeWidth="1.600" fill="#fff" /><path d="M4 3.500h3M9 3.500h4" /><path d="M1 13.500h15" strokeWidth="2.400" /><path d="M4 7v4M13 7v4M2 9l2-2 2 2M11 9l2 2 2-2" /></Art></TrackButton>
              <Ruler>
                {Array.from({ length: 101 }, (_, i) => (
                  <Frame key={i} $current={i === 0} $major={i % 5 === 0}>{i % 5 === 0 ? i : null}</Frame>
                ))}
              </Ruler>
            </TrackBar>
          </Center>
          <CommandPanel />
          <Callout width="220" height="60" viewBox="0 0 220 60">
            <defs>
              <linearGradient id="arrow" x1="0" y1="0" x2="0" y2="1">
                <stop offset="0" stopColor="#fff" />
                <stop offset=".35" stopColor="#f4f7f6" />
                <stop offset=".8" stopColor="#b3c3bd" />
                <stop offset="1" stopColor="#a8b9b2" />
              </linearGradient>
            </defs>
            <path d="M6 19H163V6L214 30 163 54V42H6z" fill="none" stroke="#fff" strokeWidth="6" strokeLinejoin="round" opacity=".7" />
            <path d="M6 19H163V6L214 30 163 54V42H6z" fill="url(#arrow)" stroke="#0b0b0b" strokeWidth="3.500" strokeLinejoin="round" />
          </Callout>
        </Work>

        <Status>
          <Listener>
            <ListenerField aria-label="Macro recorder" $bg="#dfc5c8" />
            <ListenerField aria-label="Script listener" $bg="#fff" defaultValue="Welcome to MAXScript" />
          </Listener>
          <StatusColumn>
            <StatusRow>
              <Field>1 Shape Selected</Field>
              <IconButton $w={26} aria-label="Prompt"><Art w={12} h={15}><circle cx="6" cy="5" r="4" fill="#e8a3aa" stroke="#4e2027" /><path d="M4.500 9v5M7.500 9v5" stroke="#4e2027" strokeWidth="1.500" /></Art></IconButton>
              <IconButton $w={24} aria-label="Lock selection"><Art w={12} h={15}><path d="M3.500 6V4a2.500 2.500 0 0 1 5 0v2" /><rect x="1.500" y="6.500" width="9" height="6" fill="#d5c8a5" /><path d="M6 8v3" /></Art></IconButton>
              <IconButton $w={27} aria-label="Absolute mode"><Art w={15} h={15}><rect x="1.500" y="1.500" width="12" height="12" fill="#fff" /><circle cx="7.500" cy="7.500" r="2.500" /><path d="M7.500 1v4M7.500 10v4M1 7.500h4M10 7.500h4" /></Art></IconButton>
              <Coord>X:<TextField $w={53} $h={18} $dim defaultValue={`140'2 7/8"`} /></Coord>
              <Coord>Y:<TextField $w={53} $h={18} /></Coord>
              <Coord>Z:<TextField $w={53} $h={18} $dim defaultValue={`0'0"`} /></Coord>
              <Field $w={93}>Grid = 12'0"</Field>
            </StatusRow>
            <StatusRow>
              <Field>Click or click-and-drag to select objects</Field>
              <IconButton $w={26} aria-label="Adaptive degradation"><Art w={14} h={14}><path d="M1.500 4.500h8v8h-8zM1.500 4.500l3-3h8v8l-3 3M9.500 4.500l3-3" /></Art></IconButton>
              <Field $w={93}>Add Time Tag</Field>
            </StatusRow>
          </StatusColumn>
          <KeyBlock>
            <PushButton $h={36} aria-label="Set key"><Art w={24} h={12}><circle cx="4" cy="6" r="3" strokeWidth="1.600" /><path d="M7 6h16M18 6v4M22 6v4" strokeWidth="2" /></Art></PushButton>
            <KeyColumn>
              <PushButton $h={17}>Auto Key</PushButton>
              <PushButton $h={18}>Set Key</PushButton>
            </KeyColumn>
            <KeyColumn>
              <Drop label="Key selection" value="Selected" h={17} />
              <FilterRow>
                <IconButton $w={24} $h={18} aria-label="Tangents"><Art w={18} h={16}><path d="M1 13c5 0 3-10 7-10 3 0 1 9 4 9s1-9 4-9" stroke="#a33c3c" /><path d="M3 13l6-10M17 13v3h-3z" stroke="#333" fill="#222" strokeWidth=".7" /></Art></IconButton>
                <PushButton $w={82} $h={18}>Key Filters...</PushButton>
              </FilterRow>
            </KeyColumn>
          </KeyBlock>
          <Transport>
            <TransportRow>
              <IconButton $w={22} $sep aria-label="Go to start"><Tiny d="M0 2h2v9H0zM9 2v9L3 6.500zM15 2v9L9 6.500z" /></IconButton>
              <IconButton $w={24} aria-label="Previous frame"><Tiny d="M7 2v9L1 6.500zM8 2h3v9H8zM12 2h3v9h-3z" /></IconButton>
              <IconButton $w={19} aria-label="Play"><Tiny w={12} d="M1 2v9l8-4.500zM12 11v2h-2z" /></IconButton>
              <IconButton $w={24} $sep aria-label="Next frame"><Tiny d="M1 2h3v9H1zM5 2h3v9H5zM9 2v9l6-4.500z" /></IconButton>
              <IconButton $w={24} aria-label="Go to end"><Tiny d="M1 2v9l6-4.500zM7 2v9l6-4.500zM13 2h2v9h-2z" /></IconButton>
            </TransportRow>
            <TransportRow>
              <IconButton $w={22} $sep aria-label="Key mode"><Tiny d="M0 2h1v9H0zM7 3v7L2 6.500zM8 3h2v7H8zM10 3v7l4-3.500zM15 2h1v9h-1z" /></IconButton>
              <TextField aria-label="Current frame" $w={60} $h={17} defaultValue="0" />
              <IconButton $w={15} aria-label="Step frame"><Tiny w={8} d="M1 5h6L4 1zM1 8h6l-3 4z" /></IconButton>
              <IconButton $w={17} aria-label="Time configuration"><Art w={16} h={16}><rect x="1.500" y="1.500" width="11" height="12" fill="#dde7ef" stroke="#234" /><path d="M3 3h6v4H3z" fill="#27517e" stroke="none" /><circle cx="11.500" cy="11" r="4" fill="#fff" /><path d="M11.500 8.500V11h2" /></Art></IconButton>
            </TransportRow>
          </Transport>
          <NavGrid>
            <IconButton $w={22} aria-label="Zoom"><Art w={16} h={16}><circle cx="6" cy="6" r="4" fill="#eee" /><path d="M9 9l4 5M11 3h5M13.500 1v4M11 7h5" strokeWidth="1.500" /></Art></IconButton>
            <IconButton $w={22} aria-label="Zoom all"><Art w={16} h={16}><path d="M1.500 1.500h12v12h-12zM7.500 1v12M1 7.500h12" fill="#fff" /><circle cx="9" cy="9" r="3.500" fill="#eee" /><path d="M12 12l3 3" strokeWidth="1.600" /></Art></IconButton>
            <IconButton $w={22} aria-label="Zoom extents"><Art w={17} h={16}><path d="M1 4V1h3M12 1h3v3M1 12v3h3M12 15h3v-3" /><path d="M4 6l2-2h7v6l-2 2H4z" fill="#6fa765" stroke="#234d20" /><path d="M4 6h7v6M11 6l2-2" stroke="#234d20" /></Art></IconButton>
            <IconButton $w={22} aria-label="Zoom extents all"><Art w={17} h={16}><path d="M5.500 1.500h10v12h-10zM10 1v12M5 7.500h10" fill="#fff" /><path d="M1 8l2-2h6v6l-2 2H1z" fill="#6fa765" stroke="#234d20" /></Art></IconButton>
            <IconButton $w={22} aria-label="Zoom region"><Art w={16} h={16}><rect x="1.500" y="1.500" width="10" height="10" strokeDasharray="2 1" /><circle cx="10" cy="9" r="3.500" fill="#eee" /><path d="M12 12l3 3" strokeWidth="1.600" /></Art></IconButton>
            <IconButton $w={22} aria-label="Pan"><Art w={16} h={16}><path d="M5 14L1 8l1-1 3 2-1-6 1.500-.5L7 7V1.500h1.500L9 7l1.500-5 1.500.5L11 8l2.500-3 1.500.500-3 9z" fill="#fff" strokeWidth="1" /></Art></IconButton>
            <IconButton $w={22} aria-label="Orbit"><Art w={17} h={16}><path d="M8 2v7l-6 4M8 9l6 4" /><path d="M1 10c4-4 10-4 14 0M14 11c-4 3-8 3-12 0" stroke="#2f7a2a" /><path d="M8 0l2 4H6z" fill="#222" /></Art></IconButton>
            <IconButton $w={22} aria-label="Maximize viewport"><Art w={16} h={16}><rect x="1.500" y="1.500" width="10" height="9" fill="#fff" /><path d="M9 8L4 4M4 7V4h3M13 6h2v8H8v-2" strokeWidth="1.500" /></Art></IconButton>
          </NavGrid>
        </Status>
      </Window>
    </>
  );
}
